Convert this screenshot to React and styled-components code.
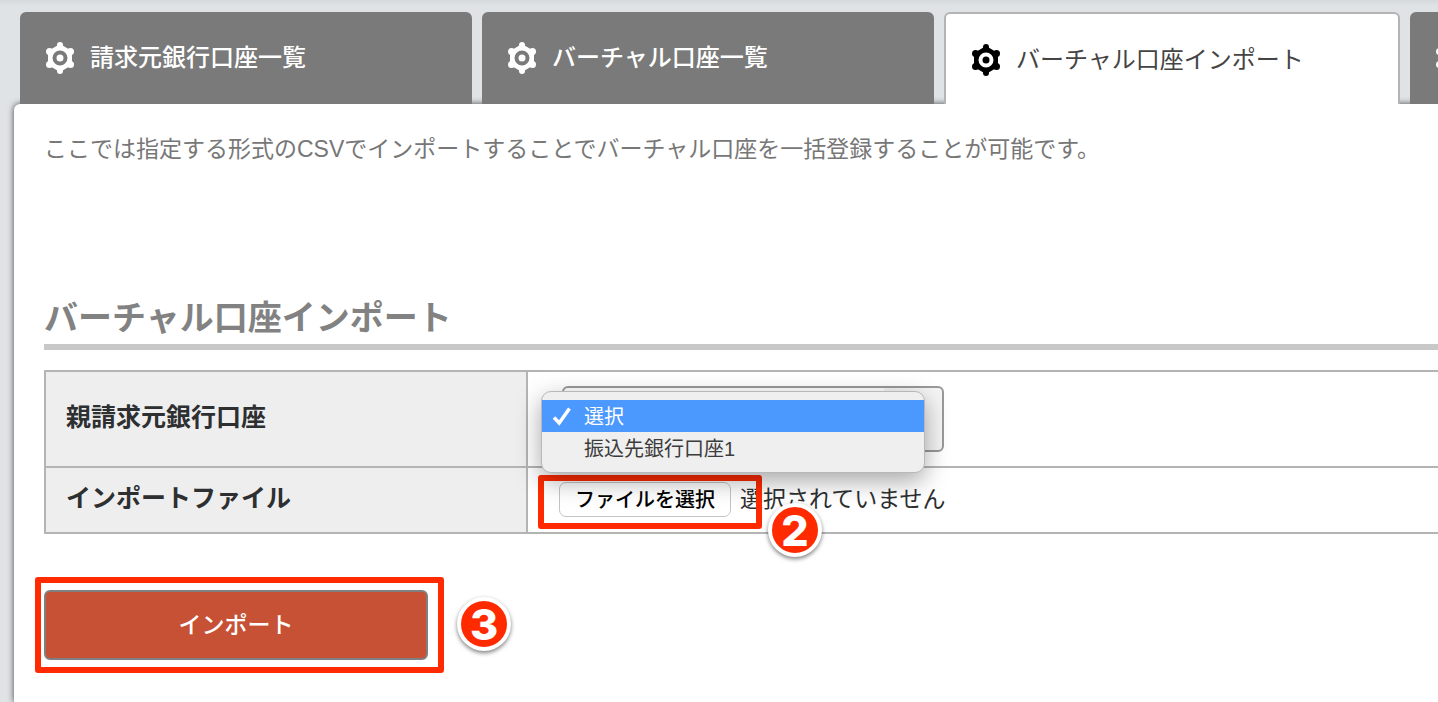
import React, { useRef } from 'react';
import styled, { createGlobalStyle } from 'styled-components';

const GlobalStyle = createGlobalStyle`
  * {
    box-sizing: border-box;
  }
  body {
    margin: 0;
    background-color: #dfe3e6;
    color: #2d2f30;
    font-family: 'Liberation Sans', 'Noto Sans CJK JP', sans-serif;
    font-size: 23px;
    overflow-x: hidden;
  }
  button,
  select {
    font-family: inherit;
  }
`;

const Page = styled.div`
  min-height: 100vh;
  display: flex;
  flex-direction: column;
  overflow: hidden;
  background: linear-gradient(#d5d9dc, #dfe3e6 6px);
`;

const Tabs = styled.nav`
  display: flex;
  gap: 10px;
  padding: 12px 0 0 20px;
  position: relative;
  z-index: 1;
`;

const Tab = styled.a`
  flex: none;
  display: flex;
  gap: 16px;
  width: ${(props) => (props.$active ? 456 : 452)}px;
  height: 92px;
  padding: 28px 0 0 26px;
  border: solid #b4b4b4;
  border-width: ${(props) => (props.$active ? '2px 2px 0' : '0')};
  border-radius: 6px 6px 0 0;
  background-color: ${(props) => (props.$active ? '#fff' : '#7a7a7a')};
  color: ${(props) => (props.$active ? '#444' : '#fff')};
  font-size: 24px;
  font-weight: ${(props) => (props.$active ? 400 : 500)};
  line-height: 36px;
  text-decoration: none;
  white-space: nowrap;

  svg {
    flex: none;
    margin-top: 2px;
    color: ${(props) => (props.$active ? '#000' : '#fff')};
  }
`;

const Panel = styled.main`
  flex: 1;
  margin-left: 14px;
  padding: 28px 0 28px 30px;
  border-radius: 6px 0 0 0;
  background-color: #fff;
  box-shadow: 0 0 6px rgba(0, 0, 0, 0.7);
`;

const Lead = styled.p`
  margin: 0;
  color: #777;
  line-height: 34px;
`;

const Title = styled.h2`
  margin: 126px 0 20px;
  border-bottom: 6px solid #c8c8c8;
  color: #828282;
  font-size: 34px;
  font-weight: 700;
  line-height: 52px;
`;

const FormTable = styled.table`
  width: 100%;
  border-spacing: 0;
  border: solid #b4b4b4;
  border-width: 2px 0 0 2px;
`;

const HeadCell = styled.th`
  width: 482px;
  height: ${(props) => props.$height}px;
  padding: 0 20px 4px;
  border: solid #b4b4b4;
  border-width: 0 2px 2px 0;
  background-color: #eee;
  font-size: 25px;
  font-weight: 700;
  line-height: 36px;
  text-align: left;
`;

const Cell = styled.td`
  padding: 0 0 0 31px;
  border-bottom: 2px solid #b4b4b4;
`;

const SelectBox = styled.div`
  position: relative;
  display: flex;
  margin-left: 3px;
`;

const Select = styled.select`
  appearance: none;
  width: 382px;
  height: 66px;
  padding: 0 20px;
  border: 2px solid #999;
  border-radius: 6px;
  background: linear-gradient(90deg, #fff 320px, #f4f4f4 320px);
  font-size: 20px;
`;

const Menu = styled.ul`
  position: absolute;
  top: 5px;
  left: -21px;
  z-index: 1;
  width: 384px;
  margin: 0;
  padding: 8px 0;
  border: 1px solid #b8b8b8;
  border-radius: 10px;
  background-color: #efefef;
  box-shadow: 0 8px 24px rgba(0, 0, 0, 0.35);
  list-style: none;
`;

const MenuItem = styled.li`
  display: flex;
  align-items: center;
  height: 32px;
  padding-top: 2px;
  padding-left: ${(props) => (props.$selected ? 10 : 42)}px;
  gap: 12px;
  background-color: ${(props) => (props.$selected ? '#4b98ff' : 'transparent')};
  color: ${(props) => (props.$selected ? '#fff' : '#3c3c3c')};
  font-size: 20px;
  line-height: 30px;
`;

const FileBox = styled.div`
  position: relative;
  display: flex;
  align-items: center;
  gap: 9px;
  padding-bottom: 2px;
`;

const FileInput = styled.input`
  display: none;
`;

const FileButton = styled.button`
  width: 172px;
  height: 35px;
  padding: 2px 0 0;
  border: 1px solid #c4c4c4;
  border-radius: 7px;
  background-color: #fff;
  color: #000;
  font-size: 20px;
  font-weight: 500;
  line-height: 30px;
`;

const FileStatus = styled.span`
  line-height: 34px;
`;

const Actions = styled.div`
  position: relative;
  display: flex;
  margin-top: 56px;
`;

const SubmitButton = styled.button`
  width: 384px;
  height: 70px;
  padding: 0 0 4px;
  border: 2px solid #808080;
  border-radius: 6px;
  background-color: #c65135;
  color: #fff;
  font-size: 23px;
  font-weight: 500;
`;

const Frame = styled.span`
  position: absolute;
  top: ${(props) => props.$top}px;
  left: ${(props) => props.$left}px;
  width: ${(props) => props.$width}px;
  height: ${(props) => props.$height}px;
  border: 6px solid #ff2a00;
  border-radius: 3px;
  pointer-events: none;
`;

const Badge = styled.span`
  position: absolute;
  top: ${(props) => props.$top}px;
  left: ${(props) => props.$left}px;
  z-index: 2;
  width: 54px;
  height: 54px;
  border: 4px solid #fff;
  border-radius: 50%;
  background-color: #ff2a00;
  box-shadow: 0 2px 4px rgba(0, 0, 0, 0.5);
  color: #fff;
  font-family: Inter, 'Liberation Sans', sans-serif;
  font-size: 43px;
  font-weight: 800;
  line-height: 46px;
  text-align: center;
`;

const Gear = () => (
  <svg width="28" height="32" viewBox="0 0 28 32" fill="currentColor" aria-hidden="true">
    <path
      fillRule="evenodd"
      stroke="currentColor"
      strokeWidth="2"
      strokeLinejoin="round"
      d="M14 3 25 9.500V22.500L14 29 3 22.500V9.500ZM14 7.500a8.500 8.500 0 1 0 0 17 8.500 8.500 0 0 0 0-17Z"
    />
    <circle cx="14" cy="3" r="3" />
    <circle cx="14" cy="29" r="3" />
    <circle cx="3.500" cy="9.500" r="3.500" />
    <circle cx="24.500" cy="9.500" r="3.500" />
    <circle cx="3.500" cy="22.500" r="3.500" />
    <circle cx="24.500" cy="22.500" r="3.500" />
    <circle cx="14" cy="16" r="3.500" />
  </svg>
);

const Check = () => (
  <svg width="20" height="20" viewBox="0 0 20 20" fill="none" aria-hidden="true">
    <path d="M2 10.500 7.200 16 17.500 1.500" stroke="currentColor" strokeWidth="3.500" />
  </svg>
);

const App = () => {
  const fileRef = useRef(null);

  return (
    <Page>
      <GlobalStyle />
      <Tabs>
        <Tab href="#accounts">
          <Gear />
          請求元銀行口座一覧
        </Tab>
        <Tab href="#virtual">
          <Gear />
          バーチャル口座一覧
        </Tab>
        <Tab href="#import" $active aria-current="page">
          <Gear />
          バーチャル口座インポート
        </Tab>
        <Tab href="#next">
          <Gear />
        </Tab>
      </Tabs>
      <Panel>
        <Lead>
          ここでは指定する形式のCSVでインポートすることでバーチャル口座を一括登録することが可能です。
        </Lead>
        <Title>バーチャル口座インポート</Title>
        <FormTable>
          <tbody>
            <tr>
              <HeadCell scope="row" $height={96}>
                <label htmlFor="parent">親請求元銀行口座</label>
              </HeadCell>
              <Cell>
                <SelectBox>
                  <Select id="parent" defaultValue="">
                    <option value="">選択</option>
                    <option value="1">振込先銀行口座1</option>
                  </Select>
                  <Menu role="listbox">
                    <MenuItem role="option" aria-selected="true" $selected>
                      <Check />
                      選択
                    </MenuItem>
                    <MenuItem role="option" aria-selected="false">
                      振込先銀行口座1
                    </MenuItem>
                  </Menu>
                </SelectBox>
              </Cell>
            </tr>
            <tr>
              <HeadCell scope="row" $height={66}>
                <label htmlFor="file">インポートファイル</label>
              </HeadCell>
              <Cell>
                <FileBox>
                  <FileInput id="file" type="file" accept=".csv" ref={fileRef} />
                  <FileButton type="button" onClick={() => fileRef.current.click()}>
                    ファイルを選択
                  </FileButton>
                  <FileStatus>選択されていません</FileStatus>
                  <Frame $top={-7} $left={-21} $width={224} $height={54} />
                  <Badge $top={21} $left={209}>2</Badge>
                </FileBox>
              </Cell>
            </tr>
          </tbody>
        </FormTable>
        <Actions>
          <SubmitButton type="submit">インポート</SubmitButton>
          <Frame $top={-13} $left={-9} $width={409} $height={96} />
          <Badge $top={7} $left={413}>3</Badge>
        </Actions>
      </Panel>
    </Page>
  );
};

export default App;
